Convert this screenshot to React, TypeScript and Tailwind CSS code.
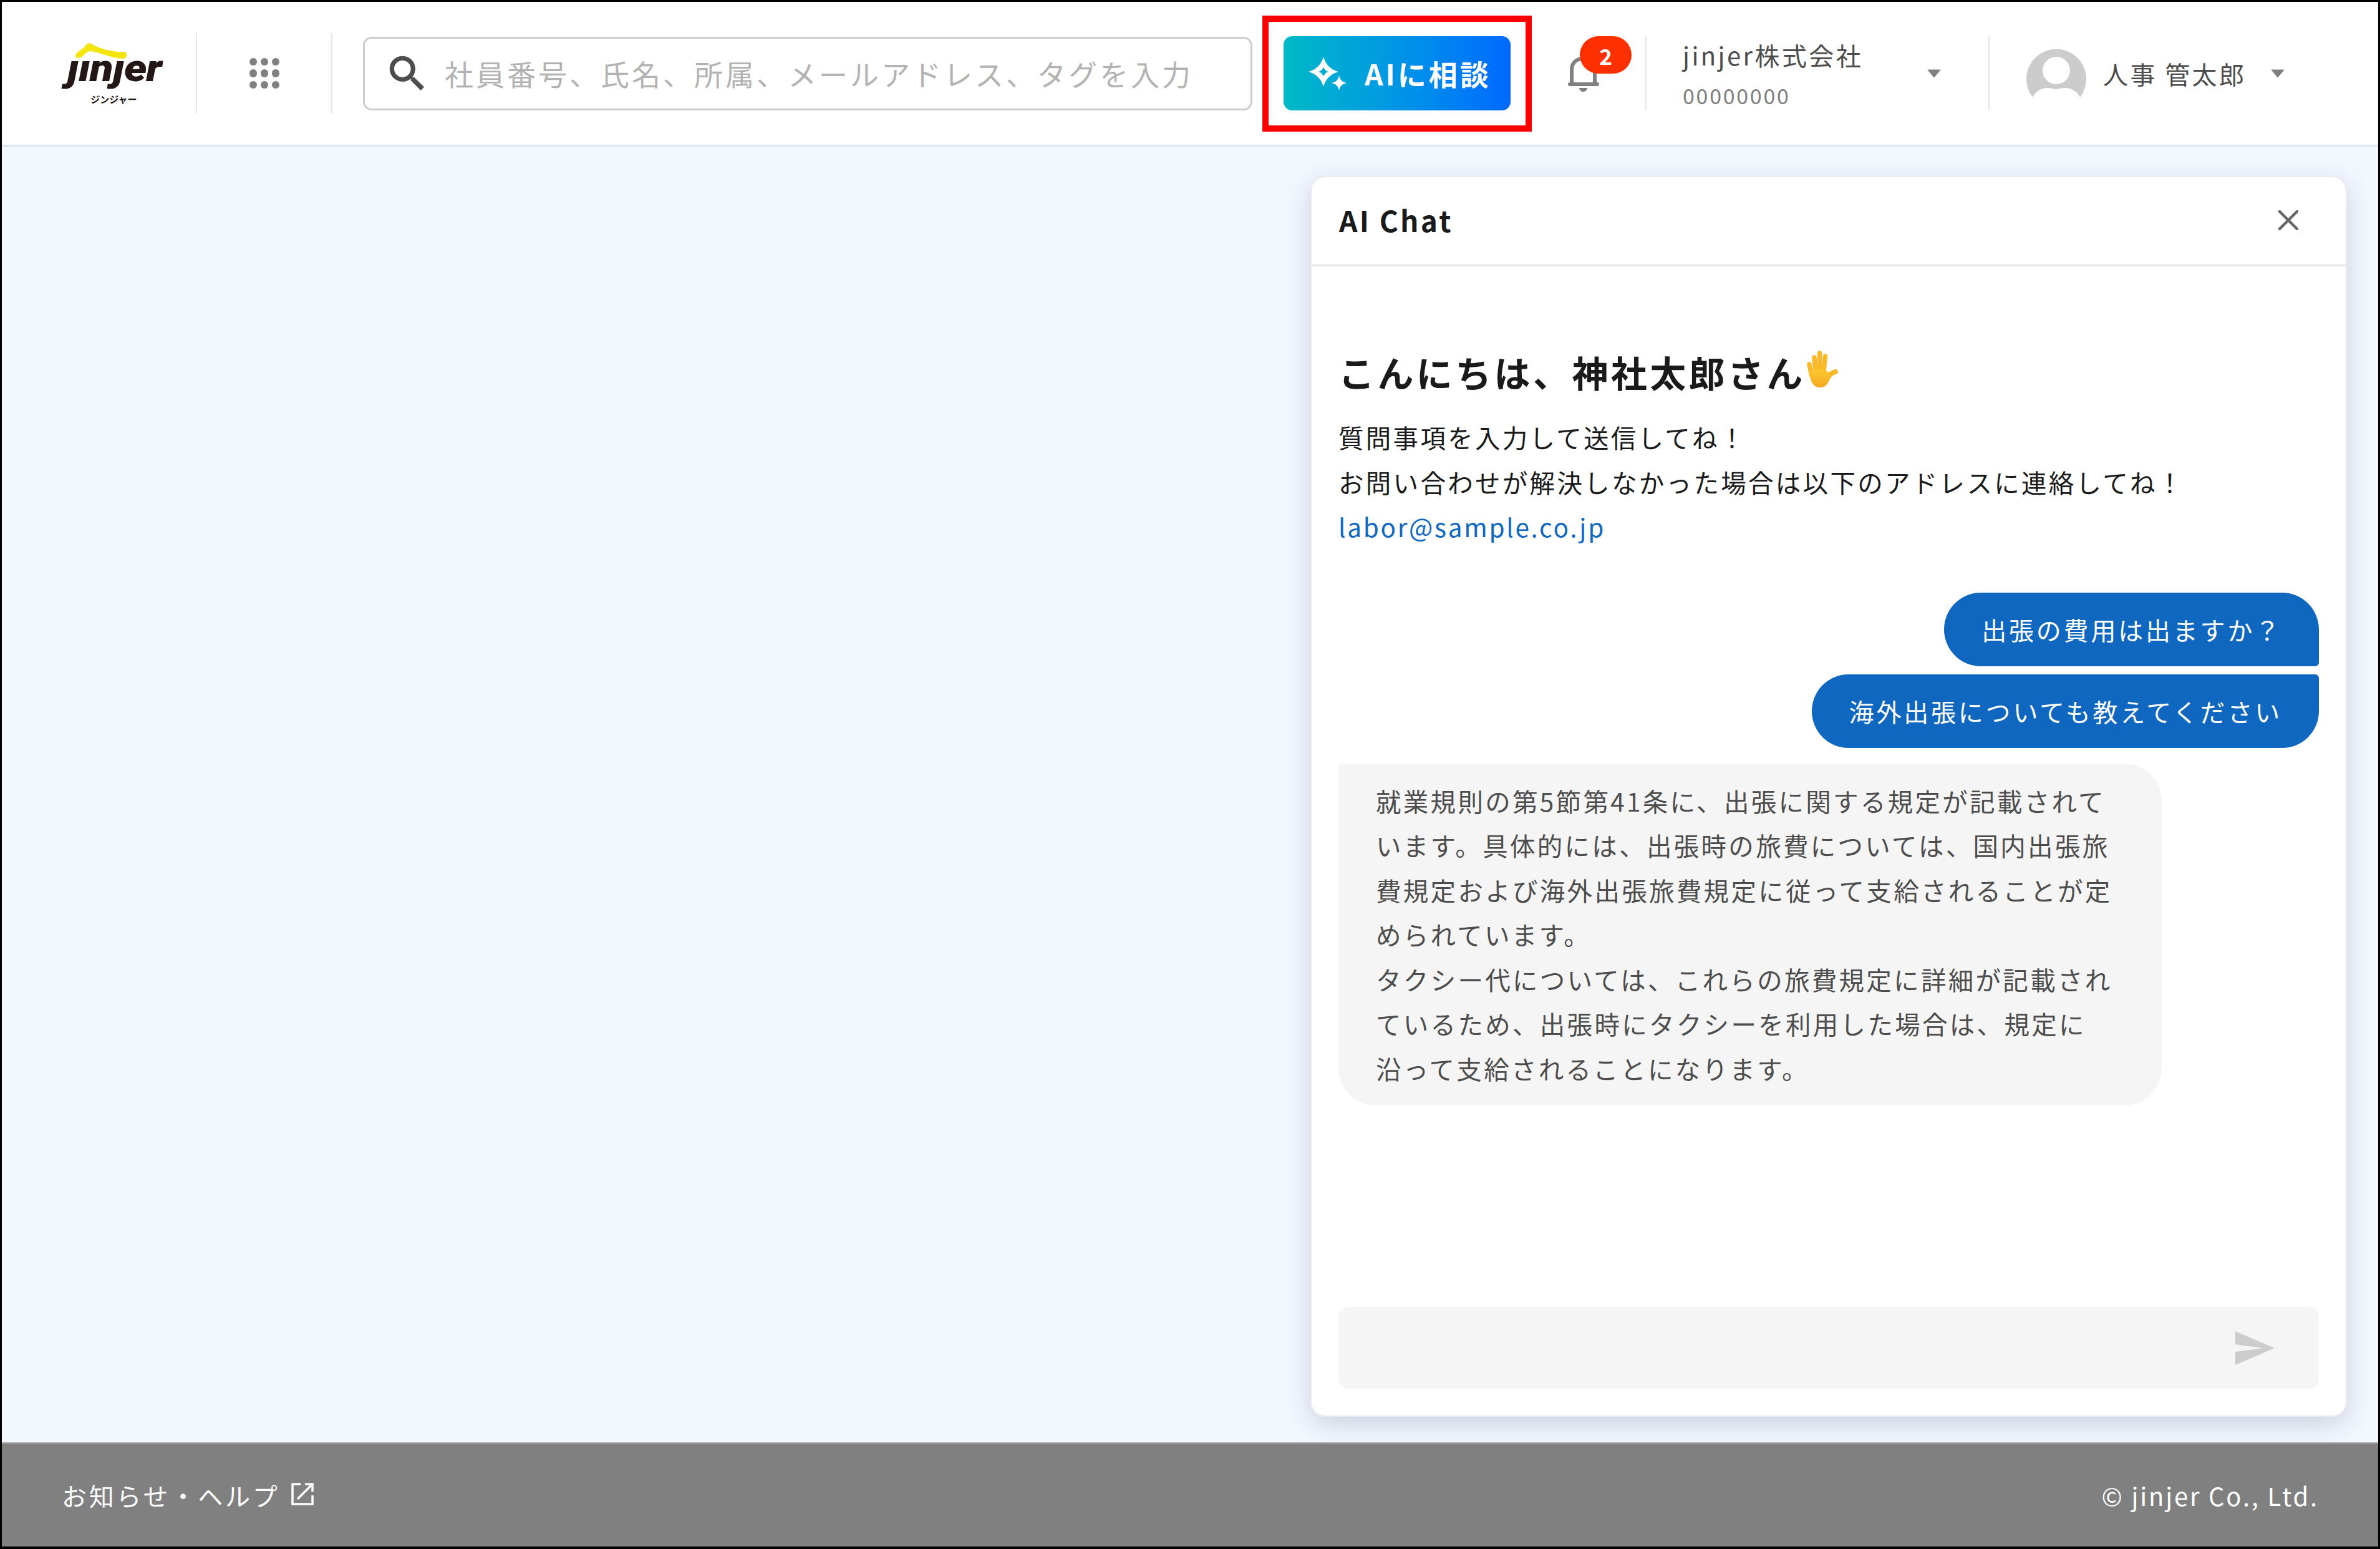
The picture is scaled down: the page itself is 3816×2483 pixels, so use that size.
const Caret = () => (
  <svg width="22" height="14" viewBox="0 0 22 14" className="shrink-0">
    <path d="M1 1H21L11 13Z" fill="#808080" stroke="#808080" strokeWidth="1" strokeLinejoin="round" />
  </svg>
);

const Logo = () => (
  <div className="w-[311px] flex flex-col items-center shrink-0 pl-[48px]">
    <svg width="84" height="26" viewBox="0 0 84 26" className="-ml-[42px]">
      <path
        d="M1 20C2 13 12 12 18 3C20 0 25 0 28 2C38 8 60 15 78 14C85 14 85 24 78 25C60 25 38 14 24 13C18 13 12 25 6 24C2 24 0 23 1 20Z"
        fill="#f5e50f"
      />
    </svg>
    <span className="font-['Roboto',sans-serif] italic font-black text-[#231815] text-[60px] leading-[58px] h-[58px] tracking-[-1px] -mt-[14px] scale-x-[1.15]">
      ȷınȷer
    </span>
    <span className="font-bold text-[#231815] text-[15px] leading-[16px] tracking-normal mt-[12px]">ジンジャー</span>
  </div>
);

const Grid = () => (
  <div className="w-[215px] flex justify-center shrink-0">
    <div className="grid grid-cols-3 gap-[6px]">
      {Array.from({ length: 9 }).map((_, i) => (
        <span key={i} className="w-[12px] h-[12.5px] rounded-full bg-[#808080]" />
      ))}
    </div>
  </div>
);

const SearchBox = () => (
  <div className="ml-[49px] w-[1426px] h-[118px] shrink-0 flex items-center border-[3px] border-[#cccccc] rounded-[14px] bg-white pl-[31px]">
    <svg width="74" height="74" viewBox="0 0 24 24" className="shrink-0">
      <path
        fill="#4d4d4d"
        stroke="#4d4d4d"
        strokeWidth="0.35"
        d="M15.5 14h-.79l-.28-.27C15.41 12.59 16 11.11 16 9.5 16 5.91 13.09 3 9.5 3S3 5.91 3 9.5 5.91 16 9.5 16c1.61 0 3.09-.59 4.23-1.57l.27.28v.79l5 4.99L20.49 19l-4.99-5zm-6 0C7.01 14 5 11.99 5 9.5S7.01 5 9.5 5 14 7.01 14 9.5 11.99 14 9.5 14z"
      />
    </svg>
    <span className="ml-[23px] text-[46px] tracking-[4px] text-[#b3b3b3] whitespace-nowrap">
      社員番号、氏名、所属、メールアドレス、タグを入力
    </span>
  </div>
);

const AiButton = () => (
  <div className="ml-[16px] w-[432px] h-[186px] shrink-0 border-[10px] border-[#ff0000] flex items-center justify-center">
    <div className="w-[364px] h-[119px] rounded-[14px] bg-linear-to-r from-[#00b9c6] to-[#0068ff] flex items-center pl-[40px] gap-[29px]">
      <svg width="61" height="54" viewBox="0 0 61 54" className="shrink-0">
        <path
          fill="#ffffff"
          fillRule="evenodd"
          d="M24 0C27 12 36 21 48 24C36 27 27 36 24 48C21 36 12 27 0 24C12 21 21 12 24 0ZM24 16C25 20 28 23 32 24C28 25 25 28 24 32C23 28 20 25 16 24C20 23 23 20 24 16Z"
        />
        <path
          fill="#ffffff"
          d="M49 30C50.5 37 54 40.5 61 42C54 43.5 50.5 47 49 54C47.5 47 44 43.5 37 42C44 40.5 47.5 37 49 30Z"
        />
      </svg>
      <span className="text-[46px] font-bold tracking-[4px] text-white whitespace-nowrap">AIに相談</span>
    </div>
  </div>
);

const Bell = () => (
  <div className="relative ml-[58px] mt-[5px] w-[50px] h-[60px] shrink-0">
    <svg width="50" height="60" viewBox="0 0 50 60">
      <path d="M6 45V22C6 10 14 4 24.5 4C35 4 43 10 43 22V45" fill="none" stroke="#808080" strokeWidth="6" />
      <path d="M3 45H47" stroke="#808080" strokeWidth="6" strokeLinecap="round" />
      <path d="M18 51H31C30 59 19 59 18 51Z" fill="#808080" />
    </svg>
    <span className="absolute left-[19px] -top-[32px] w-[83px] h-[60px] rounded-full bg-[#ff3000] flex items-center justify-center text-white font-bold text-[35px] leading-none">
      2
    </span>
  </div>
);

const Divider = () => <div className="w-[2px] h-[119px] bg-[#e5e5e5] shrink-0" />;

const Company = () => (
  <div className="ml-[58px] w-[414px] flex items-center justify-between shrink-0">
    <div className="flex flex-col mt-[6px] gap-[15px]">
      <span className="text-[40px] leading-[50px] tracking-[3.4px] text-[#4d4d4d] whitespace-nowrap">jinjer株式会社</span>
      <span className="text-[34px] leading-[50px] tracking-[2.7px] text-[#808080]">00000000</span>
    </div>
    <Caret />
  </div>
);

const User = () => (
  <div className="ml-[59px] flex items-center shrink-0">
    <svg width="96" height="77" viewBox="0 0 96 77" className="shrink-0">
      <path
        fill="#cccccc"
        d="M10 77A48 48 0 1 1 86 77C82 68 72 62 62 62C56 62 52 64 48 64C44 64 40 62 34 62C24 62 14 68 10 77Z"
      />
      <circle cx="48" cy="34" r="22" fill="#ffffff" />
    </svg>
    <span className="ml-[27px] w-[269px] text-[40px] tracking-[3.4px] text-[#4d4d4d] whitespace-nowrap">人事 管太郎</span>
    <Caret />
  </div>
);

const Header = () => (
  <header className="relative z-10 h-[229px] shrink-0 bg-white flex items-center shadow-[0_2px_3px_rgba(190,200,220,0.7)]">
    <Logo />
    <div className="w-[2px] h-[130px] bg-[#e5e5e5] shrink-0" />
    <Grid />
    <div className="w-[2px] h-[130px] bg-[#e5e5e5] shrink-0" />
    <SearchBox />
    <AiButton />
    <Bell />
    <div className="ml-[74px]">
      <Divider />
    </div>
    <Company />
    <div className="ml-[76px]">
      <Divider />
    </div>
    <User />
  </header>
);

const Hand = () => (
  <svg width="60" height="62" viewBox="18 8 60 62" className="shrink-0 -mt-[8px]">
    <defs>
      <linearGradient id="palm" x1="0" y1="0" x2="0" y2="1">
        <stop offset="0" stopColor="#fdc92f" />
        <stop offset="1" stopColor="#f6a821" />
      </linearGradient>
    </defs>
    <g stroke="#f9b929" strokeWidth="7.5" strokeLinecap="round" fill="none">
      <path d="M24 31L28 50" />
      <path d="M32 20L34 42" />
      <path d="M40.500 13V42" />
      <path d="M49.500 18L47 42" />
      <path d="M66 43C60 44 56 47 52 56" strokeWidth="8" />
    </g>
    <path d="M25 44C27 38 52 36 56 46C57 60 52 68 41 68C30 68 25 58 25 44Z" fill="url(#palm)" />
  </svg>
);

const UserBubble = ({ text, corner }: { text: string; corner: string }) => (
  <div className={`h-[118px] pl-[60px] pr-[59px] flex items-center self-end bg-[#0f67c0] text-white text-[40px] tracking-[3.8px] whitespace-nowrap ${corner}`}>
    {text}
  </div>
);

const ChatCard = () => (
  <section className="w-[1662px] flex flex-col bg-white border-[2px] border-[#ebebeb] rounded-[24px] shadow-[0_12px_40px_rgba(40,60,110,0.2)]">
    <div className="h-[143px] shrink-0 flex items-center justify-between pl-[44px] pr-[76px] border-b-[3px] border-[#e5e5e5]">
      <span className="text-[46px] font-bold tracking-[3.2px] text-[#1a1a1a] -mt-[3px]">AI Chat</span>
      <svg width="32" height="32" viewBox="0 0 32 32" className="-mt-[3px]">
        <path d="M2 2L30 30M30 2L2 30" stroke="#666666" strokeWidth="4.500" strokeLinecap="round" />
      </svg>
    </div>
    <div className="flex-1 flex flex-col pl-[43px] pr-[43px] pb-[43px]">
      <div className="mt-[129px] flex items-center h-[80px]">
        <span className="text-[58px] leading-[80px] font-bold tracking-[4.400px] text-[#1a1a1a] whitespace-nowrap">
          こんにちは、神社太郎さん
        </span>
        <Hand />
      </div>
      <div className="mt-[29px] text-[40.5px] leading-[71.5px] tracking-[3.3px] text-[#1a1a1a]">
        <p>質問事項を入力して送信してね！</p>
        <p>お問い合わせが解決しなかった場合は以下のアドレスに連絡してね！</p>
        <p className="text-[#1068c0] tracking-[2.7px]">labor@sample.co.jp</p>
      </div>
      <div className="mt-[70px] flex flex-col gap-[13px]">
        <UserBubble text="出張の費用は出ますか？" corner="rounded-[59px] rounded-br-[6px]" />
        <UserBubble text="海外出張についても教えてください" corner="rounded-[59px] rounded-tr-[6px]" />
      </div>
      <div className="mt-[25px] w-[1320px] pl-[60px] py-[24px] bg-[#f5f5f5] rounded-[60px] rounded-tl-[6px] text-[40.5px] leading-[71.5px] tracking-[3.3px] text-[#4d4d4d] whitespace-nowrap">
        就業規則の第5節第41条に、出張に関する規定が記載されて
        <br />
        います。具体的には、出張時の旅費については、国内出張旅
        <br />
        費規定および海外出張旅費規定に従って支給されることが定
        <br />
        められています。
        <br />
        タクシー代については、これらの旅費規定に詳細が記載され
        <br />
        ているため、出張時にタクシーを利用した場合は、規定に
        <br />
        沿って支給されることになります。
      </div>
      <div className="mt-auto h-[131px] shrink-0 rounded-[16px] bg-[#f5f5f5] flex items-center justify-end pr-[74px]">
        <svg width="72" height="72" viewBox="0 0 24 24" className="-mr-[6px]">
          <path fill="#cccccc" d="M2.01 21L23 12 2.01 3 2 10l15 2-15 2z" />
        </svg>
      </div>
    </div>
  </section>
);

const Footer = () => (
  <footer className="h-[167px] shrink-0 bg-[#808080] border-t-[2px] border-[#a6a6a6] flex items-center justify-between pl-[96px] pr-[95px] text-white text-[40px]">
    <div className="flex items-center gap-[18px] tracking-[3.8px]">
      <span>お知らせ・ヘルプ</span>
      <svg width="36" height="36" viewBox="0 0 36 36" className="-mt-[4px]">
        <g fill="none" stroke="#ffffff" strokeWidth="3.500">
          <path d="M15 2H2V34H34V20" />
          <path d="M11 25L33 3" strokeLinecap="round" />
          <path d="M22 2H34V14" />
        </g>
      </svg>
    </div>
    <span className="tracking-[2.8px]">© jinjer Co., Ltd.</span>
  </footer>
);

export default function App() {
  return (
    <div className="w-[3816px] h-[2483px] flex flex-col overflow-hidden border-[3px] border-b-[4px] border-black bg-[#f3f7fe] font-['Noto_Sans_CJK_JP','Noto_Sans',sans-serif]">
      <Header />
      <main className="flex-1 min-h-0 flex justify-end pt-[50px] pb-[41px] pr-[50px]">
        <ChatCard />
      </main>
      <Footer />
    </div>
  );
}
